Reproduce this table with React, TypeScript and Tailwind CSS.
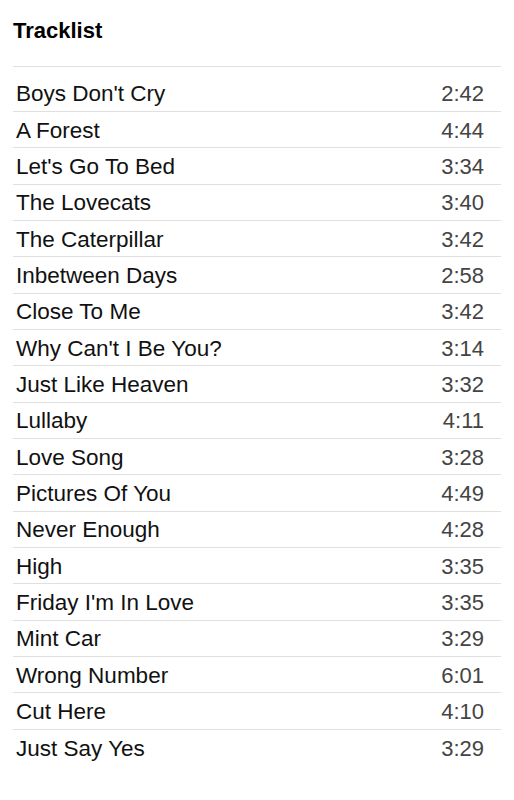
import React from "react";

const tracks: [string, string][] = [
  ["Boys Don't Cry", "2:42"],
  ["A Forest", "4:44"],
  ["Let's Go To Bed", "3:34"],
  ["The Lovecats", "3:40"],
  ["The Caterpillar", "3:42"],
  ["Inbetween Days", "2:58"],
  ["Close To Me", "3:42"],
  ["Why Can't I Be You?", "3:14"],
  ["Just Like Heaven", "3:32"],
  ["Lullaby", "4:11"],
  ["Love Song", "3:28"],
  ["Pictures Of You", "4:49"],
  ["Never Enough", "4:28"],
  ["High", "3:35"],
  ["Friday I'm In Love", "3:35"],
  ["Mint Car", "3:29"],
  ["Wrong Number", "6:01"],
  ["Cut Here", "4:10"],
  ["Just Say Yes", "3:29"],
];

export default function App() {
  return (
    <div
      className="w-[514px] h-[800px] bg-white px-[13px] pt-[20px]"
      style={{ fontFamily: '"Liberation Sans", Arial, sans-serif' }}
    >
      <h2 className="text-[22px] leading-[22px] font-bold text-black">Tracklist</h2>
      <div className="mt-[24px] border-t border-[#e0e0e0] pt-[8.65px]">
        {tracks.map(([name, time], i) => (
          <div
            key={i}
            className={`flex items-center justify-between h-[36.35px] pl-[3px] pr-[17px] pt-[2px] ${
              i < tracks.length - 1 ? "border-b border-[#e0e0e0]" : ""
            }`}
          >
            <span className="text-[22.5px] leading-[22px] text-[#111]">{name}</span>
            <span className="text-[22px] leading-[22px] text-[#444]">{time}</span>
          </div>
        ))}
      </div>
    </div>
  );
}
